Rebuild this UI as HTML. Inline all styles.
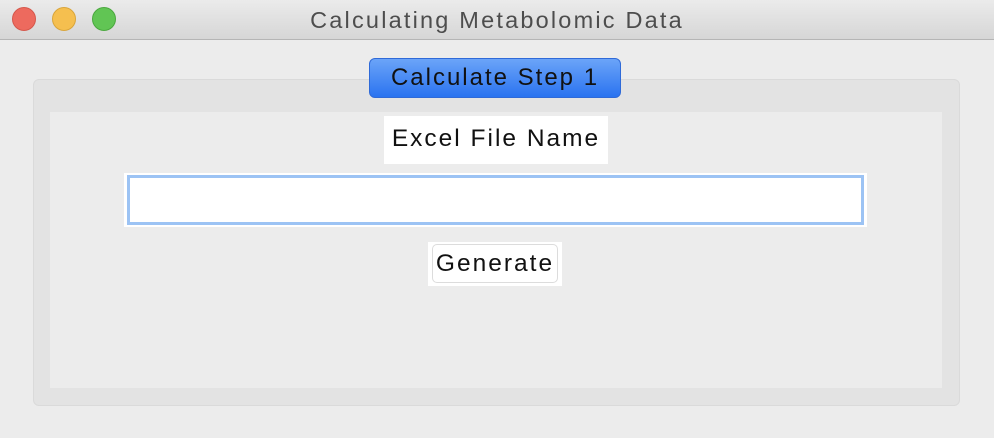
<!DOCTYPE html>
<html><head><style>
body{margin:0;width:994px;height:438px;background:#ececec;font-family:"Liberation Sans",sans-serif;position:relative;overflow:hidden}
div{position:absolute;box-sizing:border-box}
.tb{left:0;top:0;width:994px;height:40px;background:linear-gradient(#ebebeb,#d6d6d6);border-bottom:1px solid #b5b5b5}
.dot{top:7px;width:24px;height:24px;border-radius:50%}
.t{left:0;width:994px;top:7px;text-align:center;font-size:23.5px;color:#4d4d4d;letter-spacing:2.2px}
</style></head><body>
<div class="tb"></div>
<div class="dot" style="left:12px;background:#ed6a5e;border:1px solid #d5574b"></div>
<div class="dot" style="left:52px;background:#f5bf4f;border:1px solid #d9a53a"></div>
<div class="dot" style="left:92px;background:#61c554;border:1px solid #4aa83e"></div>
<div class="t">Calculating Metabolomic Data</div>
<div style="left:33px;top:79px;width:927px;height:327px;background:#e3e3e3;border:1px solid #dadada;border-radius:6px"></div>
<div style="left:50px;top:112px;width:892px;height:276px;background:#ececec"></div>
<div style="left:369px;top:58px;width:252px;height:40px;border-radius:6px;background:linear-gradient(#6ba4f8,#2a73f0);border:1px solid #2f6ad8;font-size:24px;text-align:center;line-height:38px;color:#111;letter-spacing:2px">Calculate Step 1</div>
<div style="left:384px;top:116px;width:224px;height:48px;background:#fff;font-size:24.5px;text-align:center;line-height:46px;color:#111;letter-spacing:2px">Excel File Name</div>
<div style="left:124px;top:173px;width:743px;height:54px;background:#fff"></div>
<div style="left:127px;top:175px;width:737px;height:50px;border:3px solid #9cc3f4;background:#fff"></div>
<div style="left:428px;top:242px;width:134px;height:44px;background:#fff"></div>
<div style="left:432px;top:244px;width:126px;height:39px;border:1px solid #dcdcdc;border-radius:5px;background:#fff;font-size:24.5px;text-align:center;line-height:37px;color:#111;letter-spacing:2px">Generate</div>
</body></html>
